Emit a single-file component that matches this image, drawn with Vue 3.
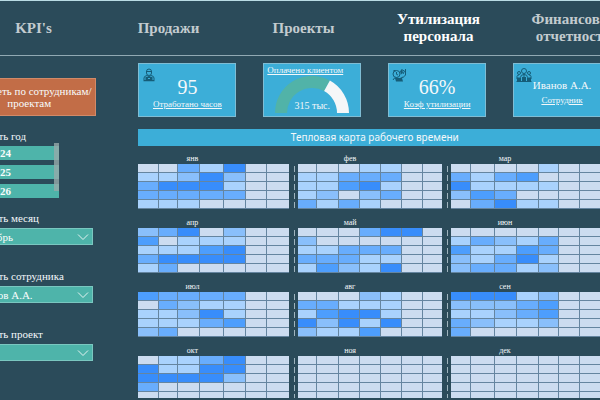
<script setup>
import { ref } from 'vue'

const tabs = ["KPI's", 'Продажи', 'Проекты', 'Утилизация персонала', 'Финансовая отчетность']
const activeTab = ref(3)
const years = [2024, 2025, 2026]
const filters = [
  { id: 'month', label: 'Выбрать месяц', value: 'Октябрь' },
  { id: 'employee', label: 'Выбрать сотрудника', value: 'Иванов А.А.' },
  { id: 'project', label: 'Выбрать проект', value: '' },
]

// Relative column widths of the three month columns
const columns = [
  [21, 19, 22, 24, 22, 21, 22],
  [19, 21, 21, 21, 21, 21, 19],
  [20, 24, 21, 22, 20, 21, 21],
]
const share = (list, n) => (n / list.reduce((a, b) => a + b, 0)) * 100 + '%'

// One digit per day: workload level from 0 to 5
const months = [
  { name: 'янв', weeks: ['0031500', '1125200', '3555100', '3333300', '1110000'] },
  { name: 'фев', weeks: ['0001100', '1133300', '1145100', '1202300', '3131000'] },
  { name: 'мар', weeks: ['0000100', '3134000', '5111100', '2430000', '0351100'] },
  { name: 'апр', weeks: ['2350200', '4011100', '1114500', '3555500', '1300000'] },
  { name: 'май', weeks: ['0003550', '2000000', '1133300', '3331100', '1421500'] },
  { name: 'июн', weeks: ['0000000', '1321300', '4114300', '2135100', '2331200'] },
  { name: 'июл', weeks: ['4333300', '0321100', '1125100', '1113400', '2300000'] },
  { name: 'авг', weeks: ['0002100', '3311100', '1455100', '5251500', '2114000'] },
  { name: 'сен', weeks: ['5551200', '2223400', '1123400', '3211200', '3000000'] },
  { name: 'окт', weeks: ['0113500', '5115500', '5555200', '3000000', '0000000'] },
  { name: 'ноя', weeks: ['0000000', '0000000', '0000000', '0000000', '0000000'] },
  { name: 'дек', weeks: ['0000000', '0000000', '0000000', '0000000', '0000000'] },
]
</script>

<template>
  <div class="app">
    <div class="page">
      <nav class="tabs">
        <a
          v-for="(tab, i) in tabs"
          :key="tab"
          href="#"
          :class="{ active: activeTab === i }"
          @click.prevent="activeTab = i"
        >{{ tab }}</a>
      </nav>

      <div class="body">
        <aside class="side">
          <button class="switch" type="button">Смотреть по сотрудникам/<br />проектам</button>

          <section class="years">
            <h2 class="label">Выбрать год</h2>
            <div class="list">
              <button v-for="year in years" :key="year" type="button">{{ year }}</button>
              <span class="thumb"></span>
            </div>
          </section>

          <div v-for="f in filters" :key="f.id" class="filter">
            <label class="label" :for="f.id">{{ f.label }}</label>
            <div class="drop">
              <select :id="f.id"><option>{{ f.value }}</option></select>
              <svg viewBox="0 0 12 8" width="12" height="8"><path d="M1 1.500 6 6.500 11 1.500" /></svg>
            </div>
          </div>
        </aside>

        <main class="main">
          <div class="cards">
            <article class="card">
              <svg class="icon" viewBox="0 0 16 16" width="16" height="16">
                <path d="M5.500 4.500a2.500 2.500 0 0 1 5 0v1.500a2.500 2.500 0 0 1-5 0zM5 4.500h6" />
                <path d="M3 13V11q0-2 3-2.500l2 1.500 2-1.500q3 .5 3 2.500v2" />
                <path class="solid" d="M4.500 10h7v3.500h-7zM2.500 13h11v1.300h-11z" />
                <path class="spark" d="M7 11.500h2" />
              </svg>
              <strong>95</strong>
              <a href="#">Отработано часов</a>
            </article>

            <article class="card gauge">
              <a href="#">Оплачено клиентом</a>
              <div class="dial">
                <svg viewBox="0 0 74 37" width="74" height="37">
                  <path class="done" d="M6 37A31 31 0 0 1 52 9.800" />
                  <path class="rest" d="M52 9.800A31 31 0 0 1 68 37" />
                </svg>
                <span>315 тыс.</span>
              </div>
            </article>

            <article class="card">
              <svg class="icon" viewBox="0 0 16 16" width="16" height="16">
                <circle cx="5.500" cy="7" r="3.500" />
                <path d="M5.500 5v2.300L7 8M2 13q1-3 4-2l3 1.500M9 11.500l3-1.500M10.500 2.500l3 1.500-1.500 3M14.500 2v6l-3 3" />
                <path class="solid" d="M4 11h7l1 3.500H5zM9 4l2-1.500 1 3-2 2zM2.500 3h2v1.500h-2z" />
              </svg>
              <strong>66%</strong>
              <a href="#">Коэф утилизации</a>
            </article>

            <article class="card person">
              <svg class="icon" viewBox="0 0 16 16" width="16" height="16">
                <circle cx="8" cy="4" r="2.500" />
                <circle cx="3" cy="6" r="1.500" />
                <circle cx="13" cy="6" r="1.500" />
                <path d="M8 6.500v4M4.500 10.500q0-3 3.500-3t3.500 3M1 12V9.500Q1 8 3 8M15 12V9.500Q15 8 13 8" />
                <path class="solid" d="M1 10.500h4V14H1zM6 10h4v4H6zM11 10.500h4V14h-4z" />
                <path d="M.5 14.500h15" />
              </svg>
              <strong>Иванов А.А.</strong>
              <a href="#">Сотрудник</a>
            </article>
          </div>

          <h1 class="title">Тепловая карта рабочего времени</h1>

          <div class="heat">
            <div v-for="(m, i) in months" :key="m.name" class="month">
              <span v-if="i % 3" class="ticks"></span>
              <table>
                <colgroup>
                  <col v-for="(w, c) in columns[i % 3]" :key="c" :style="{ width: share(columns[i % 3], w) }" />
                </colgroup>
                <thead>
                  <tr><th colspan="5">{{ m.name }}</th><td colspan="2"></td></tr>
                </thead>
                <tbody>
                  <tr v-for="(week, r) in m.weeks" :key="r">
                    <td v-for="(level, d) in week" :key="d" :class="'l' + level"></td>
                  </tr>
                </tbody>
              </table>
            </div>
          </div>
        </main>
      </div>
    </div>
  </div>
</template>

<style>
body {
  background: #2b4b5a;
}
</style>

<style scoped>
* {
  box-sizing: border-box;
}
.app {
  height: 100vh;
  overflow: hidden;
  border-top: 1px solid #b9dbe4;
  border-bottom: 2px solid #2b4b5a;
  background: #2b4b5a;
  color: #f4f8fa;
  font-family: "Liberation Serif", serif;
}
.page {
  width: calc(100% + 75px);
  margin-left: -34px;
}
.tabs {
  display: grid;
  grid-template-columns: repeat(5, 1fr);
  align-items: center;
  height: 55px;
  border-bottom: 1px solid #91a9b3;
}
.tabs a {
  padding: 0 12px;
  color: #c3cbcf;
  font-size: 15px;
  font-weight: bold;
  line-height: 17px;
  text-align: center;
  text-decoration: none;
}
.tabs a.active {
  color: #fff;
}
.body {
  display: flex;
  gap: 42px;
  padding: 7px 30px 0 0;
}
.side {
  flex: 0 0 130px;
  padding-top: 15px;
}
button,
select {
  border: 0;
  border-radius: 0;
  color: #f8fcfc;
  font-family: inherit;
}
.switch {
  display: block;
  width: 100%;
  height: 38px;
  padding: 0 4px 0 0;
  border: 1px solid #d28a68;
  background: #c26d47;
  font-size: 11px;
  line-height: 12px;
  white-space: nowrap;
}
.label {
  display: block;
  margin: 0;
  padding-left: 2px;
  font-size: 11px;
  font-weight: normal;
  line-height: 14px;
}
.years {
  padding-top: 13px;
}
.list {
  position: relative;
  display: grid;
  gap: 5px;
  width: 93px;
  padding-top: 3px;
}
.list button {
  height: 14px;
  padding: 0 0 0 23px;
  background: #4eb4aa;
  font-size: 11px;
  font-weight: bold;
  line-height: 14px;
  text-align: left;
}
.thumb {
  position: absolute;
  top: 0;
  right: 0;
  width: 5px;
  height: 48px;
  background: rgba(151, 170, 170, 0.8);
}
.filter {
  padding-top: 24px;
}
.years + .filter {
  padding-top: 13px;
}
.drop {
  display: flex;
  align-items: center;
  width: 127px;
  margin-top: 3px;
  padding-right: 3px;
  border: 1px solid #7ac7c0;
  background: #4eb4aa;
}
.drop select {
  flex: 1;
  height: 15px;
  padding: 0 0 0 7px;
  appearance: none;
  background: none;
  font-size: 11px;
}
.drop svg {
  fill: none;
  stroke: #e4f3f2;
}
.main {
  flex: 1;
  min-width: 0;
}
.cards {
  display: grid;
  grid-template-columns: repeat(4, 1fr);
  gap: 27px;
}
.card {
  position: relative;
  display: flex;
  flex-direction: column;
  align-items: center;
  height: 54px;
  padding-top: 12px;
  border: 1px solid #7fbdd4;
  background: #3caed8;
}
.card strong {
  font-size: 20px;
  font-weight: normal;
  line-height: 22px;
}
.card a {
  color: inherit;
  font-size: 9px;
  line-height: 12px;
}
.card.person strong {
  font-size: 11px;
  line-height: 18px;
}
.card.gauge {
  align-items: stretch;
  padding: 0 0 0 3px;
}
.dial {
  display: grid;
  justify-items: center;
  align-items: end;
  padding-right: 3px;
}
.dial > * {
  grid-area: 1 / 1;
}
.dial span {
  font-size: 10px;
  line-height: 14px;
}
.dial path {
  fill: none;
  stroke-width: 12;
}
.done {
  stroke: #51b3a8;
}
.rest {
  stroke: #f5f7f8;
}
.icon {
  position: absolute;
  top: 3px;
  left: 2px;
  fill: none;
  stroke: #155d78;
}
.icon .solid {
  fill: #155d78;
  stroke: none;
}
.icon .spark {
  stroke: #3caed8;
}
.title {
  margin: 12px 0 8px;
  background: #3caed8;
  font: 10px/17px "Noto Sans", "Open Sans", sans-serif;
  text-align: center;
}
.heat {
  display: grid;
  grid-template-columns: 151fr 148fr 154fr;
  gap: 9px 5px;
  padding-right: 10px;
}
.month {
  display: flex;
  gap: 3px;
}
.ticks {
  width: 1px;
  margin-top: 10px;
  background: repeating-linear-gradient(transparent 0 2px, #9eb3bd 2px 8px, transparent 8px 9px);
}
table {
  flex: 1;
  width: 100%;
  table-layout: fixed;
  border-collapse: separate;
  border-spacing: 0;
}
th {
  height: 10px;
  padding: 0;
  font-size: 8px;
  font-weight: normal;
  line-height: 10px;
}
td {
  padding: 0;
}
tbody td {
  height: 9px;
  border: solid #6585a0;
  border-width: 0 1px 1px 0;
}
tbody td:last-child {
  border-right: 0;
}
.l0 { background: #ccdcf0; }
.l1 { background: #a9d2fd; }
.l2 { background: #89bffb; }
.l3 { background: #68adfd; }
.l4 { background: #4d9efd; }
.l5 { background: #388dfb; }
</style>
